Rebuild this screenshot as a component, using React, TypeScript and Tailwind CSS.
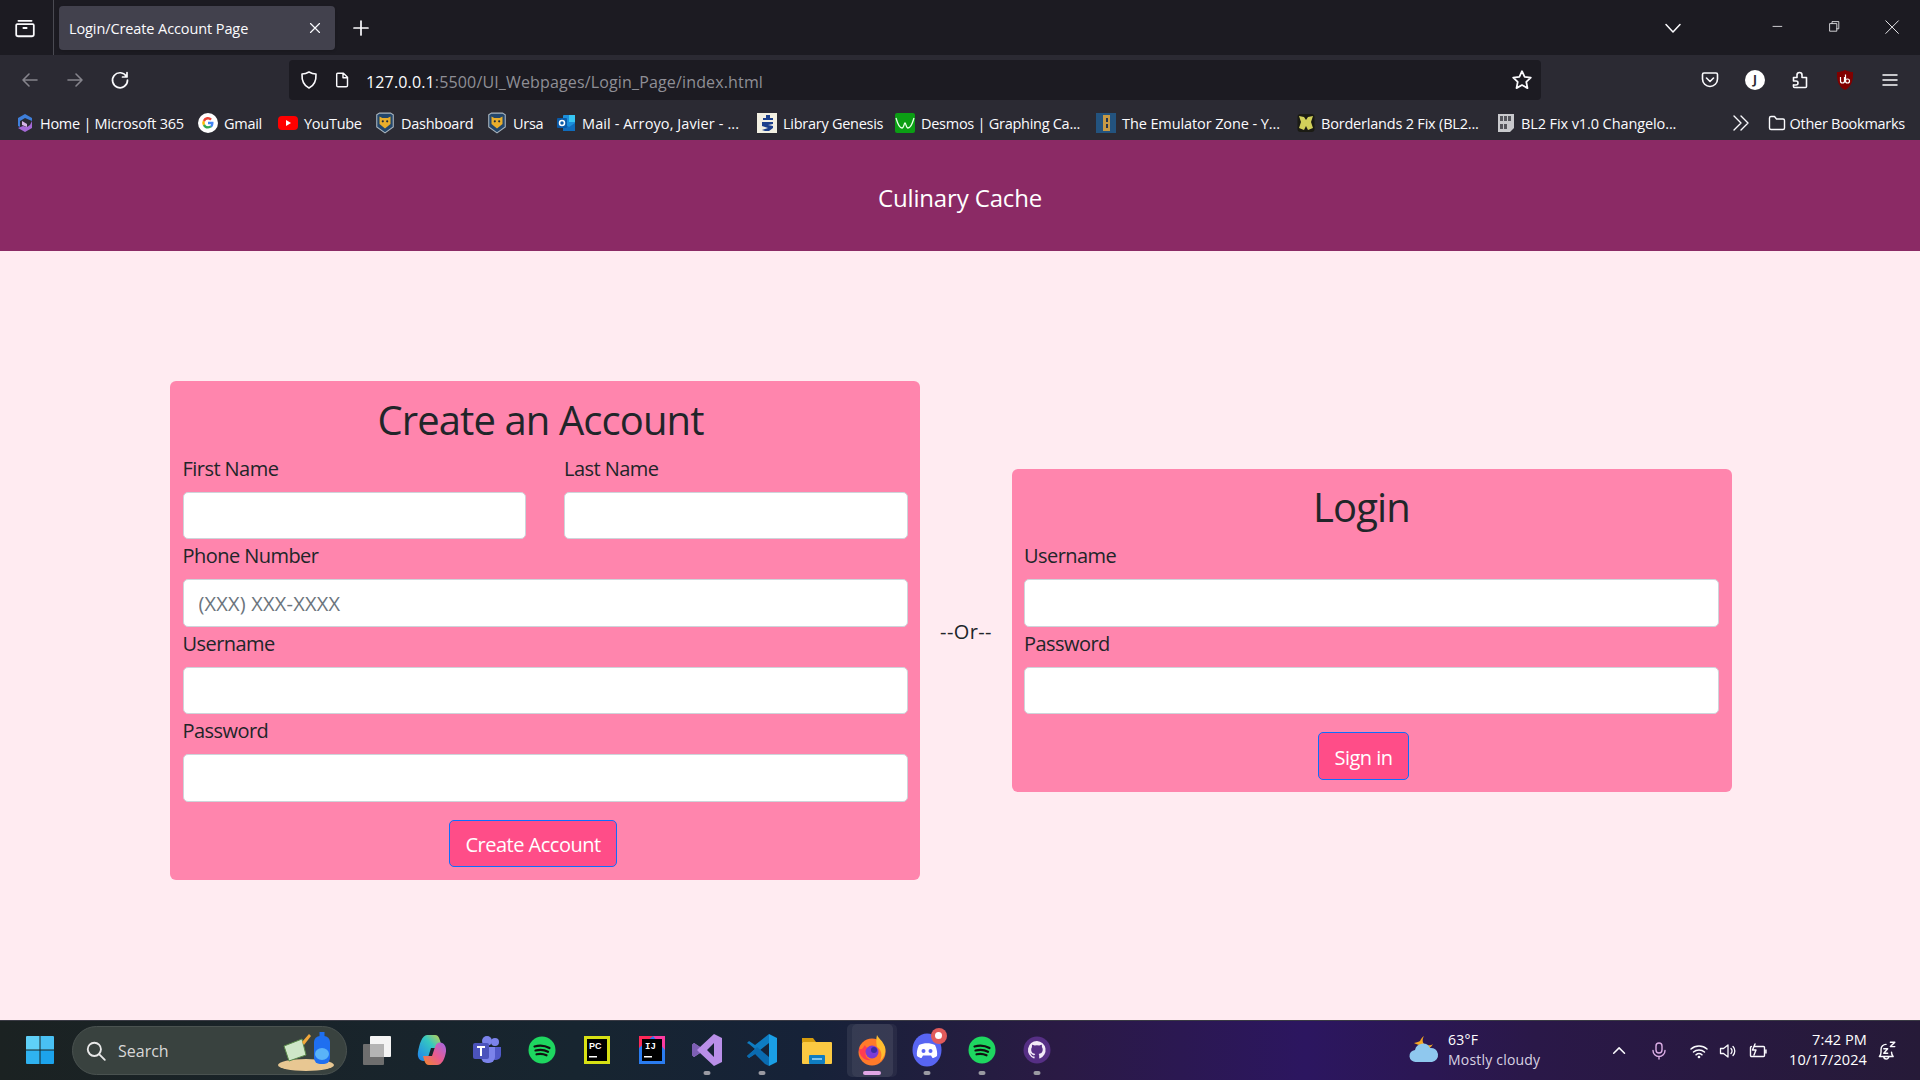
import React from "react";

const Stroke = ({ children, size = 20, className = "", w = 1.6, color = "#fbfbfe" }: any) => (
  <svg width={size} height={size} viewBox="0 0 20 20" fill="none" stroke={color} strokeWidth={w} strokeLinecap="round" strokeLinejoin="round" className={`shrink-0 ${className}`}>
    {children}
  </svg>
);

const Hex = () => (
  <svg width="20" height="22" viewBox="0 0 18 20" className="shrink-0">
    <path d="M1.500 2.500L4 1h10l2.500 1.500v11L9 19l-7.500-5.500z" fill="#23466b" stroke="#a9b4bd" strokeWidth="1" />
    <path d="M4 4l2.500 1.500h5L14 4v7l-5 4-5-4z" fill="#e8ae2c" />
    <circle cx="7" cy="8.500" r="1" fill="#1c2b3c" />
    <circle cx="11" cy="8.500" r="1" fill="#1c2b3c" />
  </svg>
);

const bookmarks: { cls: string; label: string; icon: React.ReactNode }[] = [
  {
    cls: "w-[182px]", label: "Home | Microsoft 365",
    icon: (
      <svg width="18" height="20" viewBox="0 0 18 20" className="shrink-0">
        <path d="M9 1l7 4v3l-7-3-5 3v6l-2-1V5z" fill="#3f7fdb" />
        <path d="M16 8v7l-7 4-7-4 5-2 4 1 3-2z" fill="#a569d8" />
        <path d="M6 8l5 3v3l-5-2z" fill="#d7b4e8" />
      </svg>
    ),
  },
  {
    cls: "w-[80px]", label: "Gmail",
    icon: (
      <svg width="20" height="20" viewBox="0 0 20 20" className="shrink-0">
        <circle cx="10" cy="10" r="10" fill="#fff" />
        <path d="M15.500 10c0-.5 0-.9-.1-1.300H10v2.500h3.100a2.700 2.700 0 01-1.200 1.800l1.900 1.400c1.100-1 1.700-2.500 1.700-4.400z" fill="#4285f4" />
        <path d="M10 15.500c1.500 0 2.800-.5 3.800-1.400l-1.900-1.400c-.5.300-1.100.5-1.900.5a3.300 3.300 0 01-3.100-2.300l-2 1.500A5.500 5.500 0 0010 15.500z" fill="#34a853" />
        <path d="M6.900 10.900a3.300 3.300 0 010-2.200L4.900 7.200a5.500 5.500 0 000 5.200z" fill="#fbbc05" />
        <path d="M10 6.600c.8 0 1.600.3 2.200.9l1.700-1.700A5.500 5.500 0 004.900 7.200l2 1.500A3.300 3.300 0 0110 6.600z" fill="#ea4335" />
      </svg>
    ),
  },
  {
    cls: "w-[97px]", label: "YouTube",
    icon: (
      <svg width="20" height="20" viewBox="0 0 20 20" className="shrink-0">
        <rect x="0" y="3" width="20" height="14" rx="4" fill="#f00" />
        <path d="M8 7l5 3-5 3z" fill="#fff" />
      </svg>
    ),
  },
  { cls: "w-[112px]", label: "Dashboard", icon: <Hex /> },
  { cls: "w-[69px]", label: "Ursa", icon: <Hex /> },
  {
    cls: "w-[201px] tracking-[0.100px]", label: "Mail - Arroyo, Javier - ...",
    icon: (
      <svg width="20" height="20" viewBox="0 0 20 20" className="shrink-0">
        <rect x="7" y="2" width="12" height="15" rx="1" fill="#1c8fdc" />
        <rect x="13" y="2" width="6" height="7" fill="#37c6f4" />
        <path d="M7 10l6 4 6-4v8H7z" fill="#0f6cbd" />
        <rect x="1" y="5" width="10" height="10" rx="1" fill="#0a5aa8" />
        <circle cx="6" cy="10" r="2.500" fill="none" stroke="#fff" strokeWidth="1.500" />
      </svg>
    ),
  },
  {
    cls: "w-[138px]", label: "Library Genesis",
    icon: (
      <svg width="20" height="20" viewBox="0 0 20 20" className="shrink-0">
        <rect width="20" height="20" fill="#f2efe2" />
        <path d="M9 2h4v3h3v2H6V5h3zM5 9h11v2l-5 1 5 1v2l-4 3H8l-3-1 6-2-6-2z" fill="#1c3f8c" />
      </svg>
    ),
  },
  {
    cls: "w-[201px]", label: "Desmos | Graphing Ca...",
    icon: (
      <svg width="20" height="20" viewBox="0 0 20 20" className="shrink-0">
        <rect width="20" height="20" rx="2" fill="#0b9e14" />
        <path d="M1 5c2 7 4 10 6 10s2-5 3-5 1 5 3 5 4-3 6-10" fill="none" stroke="#e8ffe8" strokeWidth="1.300" />
      </svg>
    ),
  },
  {
    cls: "w-[201px] tracking-[-0.100px]", label: "The Emulator Zone - Y...",
    icon: (
      <svg width="20" height="20" viewBox="0 0 20 20" className="shrink-0">
        <rect width="20" height="20" fill="#23537f" />
        <path d="M7 2h7v16H7z" fill="#c79a45" />
        <path d="M10 5h2v4h-2zM10 11h2v4h-2z" fill="#23334f" />
      </svg>
    ),
  },
  {
    cls: "w-[200px] tracking-[-0.200px]", label: "Borderlands 2 Fix (BL2...",
    icon: (
      <svg width="18" height="20" viewBox="0 0 18 20" className="shrink-0">
        <rect x="0.500" y="1" width="17" height="18" rx="3" fill="#1b1b14" />
        <path d="M2 3l5 1 2 3 2-3 5-1-2 6 2 6-5 2-2-4-2 4-5-2 2-6z" fill="#d2d05a" />
      </svg>
    ),
  },
  {
    cls: "w-[190px] tracking-[-0.100px]", label: "BL2 Fix v1.0 Changelo...",
    icon: (
      <svg width="18" height="20" viewBox="0 0 18 20" className="shrink-0">
        <path d="M1 1h16v14l-4 4H1z" fill="#c9c9cd" />
        <path d="M3 3h3v5H3zM7 3h3v5H7zM11 3h3v5h-3zM3 11h3v5H3zM7 11h3v5H7z" fill="#55555c" />
      </svg>
    ),
  },
];

const Field = ({ label, placeholder }: { label: string; placeholder?: string }) => (
  <div className="flex flex-col">
    <label className="h-[30px] mb-[10px] text-[20px] leading-[33px] tracking-[-0.550px] text-[#212529]">{label}</label>
    <input
      placeholder={placeholder}
      readOnly
      className="h-[47.500px] w-full rounded-[5px] border border-[#ced4da] bg-white px-[15px] pt-[1px] text-[20px] tracking-[0.200px] text-[#212529] placeholder:text-[#6c757d] outline-none"
    />
  </div>
);

const PinkButton = ({ children }: { children: React.ReactNode }) => (
  <button className="h-[47.500px] rounded-[5px] border border-[#0d6efd] bg-[#ff4d88] px-[15px] pt-[3px] text-[20px] tracking-[-0.500px] text-white">{children}</button>
);

const Title = ({ children, className = "" }: { children: React.ReactNode; className?: string }) => (
  <h2 className={`h-[48px] mb-[10px] text-[40px] leading-[52px] tracking-[-0.900px] text-[#212529] text-center ${className}`}>{children}</h2>
);

const Dot = ({ active = false }: { active?: boolean }) => (
  <span className={`absolute bottom-[3px] left-1/2 -translate-x-1/2 h-[4px] rounded-full ${active ? "w-[18px] bg-[#e0a6e6]" : "w-[7px] bg-[#9a9aa2]"}`} />
);

const TaskIcon = ({ children, dot, active }: { children: React.ReactNode; dot?: boolean; active?: boolean }) => (
  <div className="relative flex h-[55px] w-[55px] shrink-0 items-center justify-center pb-[2px]">
    {active && (
      <>
        <span className="absolute bottom-[1px] left-[8px] right-[2px] top-[1px] rounded-[5px] bg-[#ffffff0d]" />
        <span className="absolute bottom-[1px] left-[3px] right-[6px] top-[1px] rounded-[5px] bg-[#ffffff14]" />
      </>
    )}
    <span className="relative flex">{children}</span>
    {dot && <Dot active={active} />}
  </div>
);

const Bubble = ({ bg, children }: { bg: string; children: React.ReactNode }) => (
  <svg width="28" height="28" viewBox="0 0 28 28"><circle cx="14" cy="14" r="13.500" fill={bg} />{children}</svg>
);

const SpotifyIcon = () => (
  <Bubble bg="#1ed760">
    <path d="M6.500 10.500c5-1.500 10.500-1 15 1.500M7.500 14.500c4.500-1.200 9-.7 12.500 1.300M8.500 18.300c3.500-.8 7-.5 10 1" fill="none" stroke="#111" strokeWidth="2.200" strokeLinecap="round" />
  </Bubble>
);

export default function App() {
  return (
    <div className="flex h-[1080px] w-[1920px] flex-col overflow-hidden bg-[#ffebf1] font-['Open_Sans','Noto_Sans',sans-serif]">
      {/* tab strip */}
      <div className="flex h-[55px] shrink-0 items-center bg-[#1c1b22] text-[#fbfbfe]">
        <div className="flex h-full w-[54px] shrink-0 items-center justify-center border-r border-[#4a4a52] pr-[4px]">
          <Stroke size={22}>
            <path d="M4 3.500h12M3 6.500h14a1 1 0 011 1V16a1.500 1.500 0 01-1.500 1.500h-13A1.500 1.500 0 012 16V7.500a1 1 0 011-1z" />
            <path d="M8.500 10h3" />
          </Stroke>
        </div>
        <div className="ml-[5px] flex h-[44px] w-[276px] shrink-0 items-center justify-between rounded-[4px] bg-[#42414d] pl-[10px] pr-[11px] shadow">
          <span className="pt-[2px] text-[14.500px] tracking-[-0.100px]">Login/Create Account Page</span>
          <Stroke size={18} w={1.300}><path d="M5 5l10 10M15 5L5 15" /></Stroke>
        </div>
        <div className="ml-[16px]">
          <Stroke size={20} w={1.700}><path d="M10 3v14M3 10h14" /></Stroke>
        </div>
        <div className="ml-auto flex items-center">
          <Stroke size={20} w={1.500}><path d="M3 6.500l7 7.500 7-7.500" /></Stroke>
          <div className="ml-[88px]"><Stroke size={16} w={1}><path d="M2.500 8h11" /></Stroke></div>
          <div className="ml-[41px]">
            <Stroke size={16} w={1}><path d="M5 4V2h8.500v9H11M2.500 4.500H11V14H2.500z" /></Stroke>
          </div>
          <div className="ml-[40px] mr-[18px]"><Stroke size={18} w={1}><path d="M2 2l14 14M16 2L2 16" /></Stroke></div>
        </div>
      </div>

      {/* nav bar */}
      <div className="flex h-[50px] shrink-0 items-center bg-[#2b2a33] text-[#fbfbfe]">
        <div className="ml-[20px] flex w-[269px] items-center">
          <Stroke size={20} color="#85848c"><path d="M3 10h14M9 4l-6 6 6 6" /></Stroke>
          <div className="ml-[25px]"><Stroke size={20} color="#85848c"><path d="M3 10h14M11 4l6 6-6 6" /></Stroke></div>
          <div className="ml-[25px]"><Stroke size={20} w={1.700}><path d="M16.500 6.500A7.500 7.500 0 1017.500 10M17 2.500v4.500h-4.500" /></Stroke></div>
        </div>
        <div className="flex h-[40px] w-[1252px] shrink-0 items-center rounded-[4px] bg-[#1c1b22] pl-[10px] pr-[8px]">
          <Stroke size={20}><path d="M10 2c2.500 1.500 4.500 2 7 2 .3 6-1.500 11.500-7 14C4.500 15.500 2.700 10 3 4c2.500 0 4.500-.5 7-2z" /></Stroke>
          <div className="ml-[15px]"><Stroke size={18}><path d="M4 2.500h6.500L15 7v9a1.500 1.500 0 01-1.500 1.500h-9A1.500 1.500 0 013 16V3.500a1 1 0 011-1zM10 2.500V7.500h5" /></Stroke></div>
          <span className="ml-[14px] pt-[3px] text-[16px] tracking-[0.150px] text-[#fbfbfe]">127.0.0.1<span className="text-[#8f8f96]">:5500/UI_Webpages/Login_Page/index.html</span></span>
          <div className="ml-auto"><Stroke size={22}><path d="M10 2l2.400 5.200 5.600.7-4.100 3.900 1.100 5.600L10 14.600l-5 2.800 1.100-5.600L2 7.900l5.600-.7z" /></Stroke></div>
        </div>
        <div className="ml-auto flex items-center">
          <Stroke size={20}><path d="M4 3h12a1.500 1.500 0 011.500 1.500V9a7.500 7.500 0 01-15 0V4.500A1.500 1.500 0 014 3z" /><path d="M6.500 8l3.500 3.500L13.500 8" /></Stroke>
          <div className="ml-[25px] flex h-[20px] w-[20px] items-center justify-center rounded-full bg-white text-[12px] font-bold text-[#2b2a33]">J</div>
          <div className="ml-[25px]"><Stroke size={20}><path d="M7 17.500h8.500a1 1 0 001-1V7.500H12V5a2.500 2.500 0 00-5 0v2.500H3.500V11H6a2 2 0 010 4H3.500" /><path d="M3.500 15v1.500a1 1 0 001 1H7" /></Stroke></div>
          <div className="ml-[25px]">
            <svg width="20" height="22" viewBox="0 0 20 22"><path d="M10 1c3 1.500 5.500 2 8 2 .5 8-1.500 15-8 18C3.500 18 1.500 11 2 3c2.500 0 5-.5 8-2z" fill="#800000" /><path d="M5.500 8v4a2 2 0 004 0V8M10.500 5.500V12a2 2 0 004 0 2 2 0 00-4 0" fill="none" stroke="#fff" strokeWidth="1.200" /></svg>
          </div>
          <div className="ml-[25px] mr-[20px]"><Stroke size={20} w={1.500}><path d="M3 5h14M3 10h14M3 15h14" /></Stroke></div>
        </div>
      </div>

      {/* bookmarks */}
      <div className="flex h-[35px] shrink-0 items-center bg-[#2b2a33] pl-[16px] text-[14.500px] tracking-[-0.270px] text-[#fbfbfe]">
        {bookmarks.map((b, i) => (
          <div key={i} className={`flex shrink-0 items-center gap-[6px] whitespace-nowrap ${b.cls}`}>
            {b.icon}
            <span className="pt-[2px]">{b.label}</span>
          </div>
        ))}
        <div className="ml-auto flex items-center">
          <Stroke size={20} w={1.400}><path d="M3 3l7 7-7 7M10 3l7 7-7 7" /></Stroke>
          <div className="ml-[16px]"><Stroke size={20} w={1.400}><path d="M2.500 5a1.500 1.500 0 011.500-1.500h3.500L9.500 6H16a1.500 1.500 0 011.500 1.500V15a1.500 1.500 0 01-1.500 1.500H4A1.500 1.500 0 012.500 15z" /></Stroke></div>
          <span className="ml-[3px] mr-[15px] pt-[2px]">Other Bookmarks</span>
        </div>
      </div>

      {/* site header */}
      <header className="flex h-[111px] shrink-0 items-center justify-center bg-[#8b2a65] pt-[4px] text-[24px] tracking-[-0.150px] text-white">
        Culinary Cache
      </header>

      {/* page */}
      <main className="flex flex-1 items-center pb-[10px] pl-[170px]">
        <section className="w-[750px] shrink-0 rounded-[6px] bg-[#ff85ad] p-[12.500px]">
          <Title className="pr-[9px]">Create an Account</Title>
          <div className="grid grid-cols-2 gap-x-[38px]">
            <Field label="First Name" />
            <Field label="Last Name" />
          </div>
          <Field label="Phone Number" placeholder="(XXX) XXX-XXXX" />
          <Field label="Username" />
          <Field label="Password" />
          <div className="mt-[18px] flex justify-center pr-[24px]">
            <PinkButton>Create Account</PinkButton>
          </div>
        </section>
        <div className="w-[92px] shrink-0 pt-[2px] text-center text-[20px] tracking-[0.400px] text-[#212529]">--Or--</div>
        <section className="w-[720px] shrink-0 rounded-[6px] bg-[#ff85ad] py-[12.500px] pl-[12px] pr-[13px]">
          <Title className="pr-[20px]">Login</Title>
          <Field label="Username" />
          <Field label="Password" />
          <div className="mt-[18px] flex justify-center pr-[16px]">
            <PinkButton>Sign in</PinkButton>
          </div>
        </section>
      </main>

      {/* taskbar */}
      <footer className="flex h-[60px] shrink-0 items-center border-t border-[#3a3a44] bg-[linear-gradient(90deg,#1b2222_0%,#172530_30%,#162238_42%,#2a1a44_55%,#2c1660_68%,#2a1848_80%,#261a38_100%)] pl-[12px] text-white">
        <TaskIcon>
          <svg width="30" height="30" viewBox="0 0 30 30">
            <path d="M1 2a1 1 0 011-1h12.500v13.500H1z" fill="#5fd0f7" />
            <path d="M15.500 1H28a1 1 0 011 1v12.500H15.500z" fill="#49c1f4" />
            <path d="M1 15.500h13.500V29H2a1 1 0 01-1-1z" fill="#2fb2f0" />
            <path d="M15.500 15.500H29V28a1 1 0 01-1 1H15.500z" fill="#1ca3ec" />
          </svg>
        </TaskIcon>
        <div className="ml-[5px] flex h-[49px] w-[275px] shrink-0 items-center rounded-full border border-[#4a5250] bg-[#39423f] pl-[12px] pr-[10px]">
          <Stroke size={22} w={1.700} color="#e8e8e8"><circle cx="8.500" cy="8.500" r="6" /><path d="M13 13l5 5" /></Stroke>
          <span className="ml-[11px] text-[16px] text-[#d8d8d8]">Search</span>
          <div className="ml-auto">
            <svg width="58" height="42" viewBox="0 0 58 42">
              <ellipse cx="28" cy="35" rx="28" ry="6" fill="#e8c792" />
              <path d="M6 16l18-7 4 16-17 6z" fill="#cfe6c8" stroke="#5a8a4a" />
              <path d="M24 12l7-8 2 2-7 9z" fill="#f2a83b" />
              <rect x="36" y="6" width="16" height="28" rx="6" fill="#1f6ff0" />
              <path d="M44 2v6" stroke="#1f6ff0" strokeWidth="5" />
              <ellipse cx="44" cy="24" rx="7" ry="6" fill="#5ab3f8" />
            </svg>
          </div>
        </div>
        <div className="ml-[2px] flex items-center">
          <TaskIcon>
            <svg width="30" height="30" viewBox="0 0 30 30">
              <rect x="8" y="1" width="21" height="21" rx="1" fill="#f4f4f4" />
              <rect x="1" y="9" width="21" height="21" rx="1" fill="#6e6e6e" />
              <rect x="8" y="9" width="14" height="13" fill="#b4b4b4" />
            </svg>
          </TaskIcon>
          <TaskIcon>
            <svg width="30" height="32" viewBox="0 0 30 32">
              <defs>
                <linearGradient id="cp1" x1="0" y1="1" x2="1" y2="0"><stop offset="0" stopColor="#1f7ff0" /><stop offset="0.600" stopColor="#35c8c0" /><stop offset="1" stopColor="#d8d040" /></linearGradient>
                <linearGradient id="cp2" x1="0" y1="1" x2="1" y2="0"><stop offset="0" stopColor="#f08a28" /><stop offset="0.500" stopColor="#e85a90" /><stop offset="1" stopColor="#a06ae8" /></linearGradient>
              </defs>
              <path d="M10 1h8c2.500 0 3.500 1.500 4.500 4l3 9H14l-3 9.500C10 26 8.500 27 6.500 27 2.500 27 0 23 1 18 2 11 5 1 10 1z" fill="url(#cp1)" />
              <path d="M20 31h-8c-2.500 0-3.500-1.500-4.500-4L6 22h9l3-9c1-3 2.500-4.500 5-4.500 4 0 6.500 4 6 9-1 7-4 13.500-9 13.500z" fill="url(#cp2)" />
            </svg>
          </TaskIcon>
          <TaskIcon>
            <svg width="30" height="30" viewBox="0 0 30 30">
              <circle cx="23" cy="7" r="4" fill="#7b83eb" />
              <circle cx="15" cy="6" r="5" fill="#7b83eb" />
              <path d="M18 12h11v8a5 5 0 01-5 5h-1a5 5 0 01-5-5z" fill="#5059c9" />
              <path d="M9 12h14v10a6 6 0 01-6 6h-2a6 6 0 01-6-6z" fill="#7b83eb" />
              <rect x="1" y="8" width="16" height="16" rx="2" fill="#4b53bc" />
              <path d="M5 12h8M9 12v9" stroke="#fff" strokeWidth="2" />
            </svg>
          </TaskIcon>
          <TaskIcon><SpotifyIcon /></TaskIcon>
          <TaskIcon>
            <svg width="26" height="28" viewBox="0 0 26 28">
              <rect width="26" height="28" fill="#d8e014" />
              <rect x="3" y="3" width="20" height="22" fill="#000" />
              <text x="5" y="13" fontSize="9" fontWeight="700" fill="#fff" fontFamily="Liberation Sans">PC</text>
              <rect x="5" y="20" width="8" height="1.500" fill="#fff" />
            </svg>
          </TaskIcon>
          <TaskIcon>
            <svg width="26" height="28" viewBox="0 0 26 28">
              <rect width="26" height="28" fill="#2a7cf0" />
              <path d="M0 0h14L0 12z" fill="#fe2857" />
              <path d="M26 0v14L14 0z" fill="#fc3ba0" />
              <rect x="3" y="3" width="20" height="22" fill="#000" />
              <text x="6" y="13" fontSize="9" fontWeight="700" fill="#fff" fontFamily="Liberation Mono">IJ</text>
              <rect x="5" y="20" width="8" height="1.500" fill="#fff" />
            </svg>
          </TaskIcon>
          <TaskIcon dot>
            <svg width="30" height="34" viewBox="0 0 30 34">
              <path d="M22 1l8 4v24l-8 4-14-13-6 4-2-2V12l2-2 6 4zM22 10l-7 7 7 7z" fill="#b98fe8" fillRule="evenodd" />
              <path d="M0 12l2-2 6 4-3 3 3 3-6 4-2-2z" fill="#7d5fb4" />
            </svg>
          </TaskIcon>
          <TaskIcon dot>
            <svg width="30" height="34" viewBox="0 0 30 34">
              <path d="M22 1l8 4v24l-8 4z" fill="#1a9fe6" />
              <path d="M22 1v9L8 21l-6 4-2-2 8-7L2 11l-2-1 2-2 6 4z" fill="#0e7cc2" />
              <path d="M22 33v-9L10 14 8 16l-8 7 2 2 6-4 10 10z" fill="#0a6bb0" />
            </svg>
          </TaskIcon>
          <TaskIcon>
            <svg width="30" height="30" viewBox="0 0 30 30">
              <path d="M0 3h11l3 4h-14z" fill="#d69c0d" />
              <rect y="7" width="30" height="22" rx="1" fill="#fbc942" />
              <rect x="7" y="20" width="16" height="9" rx="1" fill="#0f7dc2" />
              <rect x="10" y="23" width="10" height="2" fill="#7ec4ee" />
            </svg>
          </TaskIcon>
          <TaskIcon dot active>
            <svg width="30" height="32" viewBox="0 0 30 32">
              <circle cx="15" cy="18" r="13.500" fill="#ff7a2a" />
              <path d="M20 1c2 4 6 6 8 12 1.500 5-1 11-5 14 3-6 1-12-3-14-1-4-1-8 0-12z" fill="#ffbd2e" />
              <path d="M2 14c2 3 4 0 6-3 1 3 3 3 4 4-5 2-5 9 2 11-6 1-12-3-12-12z" fill="#ff3b52" />
              <circle cx="15" cy="18" r="6.500" fill="#7a3bd6" />
              <circle cx="17" cy="16" r="3" fill="#3b2ca8" />
            </svg>
          </TaskIcon>
          <TaskIcon dot>
            <div className="relative">
              <svg width="30" height="34" viewBox="0 0 30 34">
                <ellipse cx="15" cy="17" rx="14.500" ry="16.500" fill="#5865f2" />
                <path d="M7 12c5-2.500 11-2.500 16 0 2 4 2.500 8 2 11-2 1.500-3.500 2-4.500 2l-1.500-2.500h-8L9.500 25c-1 0-2.500-.5-4.500-2-.5-3 0-7 2-11z" fill="#fff" />
                <circle cx="11.500" cy="18" r="2" fill="#5865f2" />
                <circle cx="18.500" cy="18" r="2" fill="#5865f2" />
              </svg>
              <span className="absolute -right-[5px] -top-[5px] flex h-[16px] w-[16px] items-center justify-center rounded-full bg-[#e15b5b]">
                <span className="h-[7px] w-[7px] rounded-full bg-white" />
              </span>
            </div>
          </TaskIcon>
          <TaskIcon dot><SpotifyIcon /></TaskIcon>
          <TaskIcon dot>
            <Bubble bg="#562f85">
              <path d="M14 5a9 9 0 00-3 17.500c.5 0 .6-.2.6-.4v-1.600c-2.500.5-3-1.200-3-1.200-.4-1-1-1.300-1-1.300-.8-.6.100-.6.100-.6.900.1 1.400.9 1.400.9.800 1.400 2.100 1 2.600.8a2 2 0 01.6-1.200c-2-.2-4.100-1-4.100-4.400 0-1 .3-1.800.9-2.400-.1-.2-.4-1.100.1-2.400 0 0 .8-.2 2.500.9a8.600 8.600 0 014.500 0c1.700-1.100 2.500-.9 2.500-.9.500 1.300.2 2.200.1 2.400.6.600.9 1.400.9 2.400 0 3.400-2.100 4.200-4.100 4.400.3.300.6.800.6 1.600v2.500c0 .2.100.4.600.4A9 9 0 0014 5z" fill="#f2eaf8" />
            </Bubble>
          </TaskIcon>
        </div>
        <div className="ml-auto flex items-center">
          <svg width="34" height="34" viewBox="0 0 34 34">
            <path d="M17 2c-2 3-2 8 2 9 3 .8 6 .2 7-1-3 7-12 7-14 1-2-.5-4-1.500-5-2 3-.5 5-1.500 6-2 1-2 2-4 4-5z" fill="#f5a623" />
            <path d="M9 28a6 6 0 01-1-12 8 8 0 0115-2 7 7 0 012 14z" fill="#8fc8ee" />
          </svg>
          <div className="ml-[7px] w-[163px] -mt-[2px] text-[14px] leading-[20px] tracking-[0.200px]">
            <div className="text-white">63°F</div>
            <div className="text-[#d8d2e2]">Mostly cloudy</div>
          </div>
          <Stroke size={18} w={1.700}><path d="M3 12.500L9 6.500l6 6" /></Stroke>
          <div className="ml-[20px]"><Stroke size={20} w={1.400} color="#dcaee6"><rect x="7" y="2" width="6" height="10" rx="3" /><path d="M4 9.500a6 6 0 0012 0M10 15.500V18" /></Stroke></div>
          <div className="ml-[20px]"><Stroke size={20} w={1.500}><path d="M2 8c4.500-4 11.500-4 16 0M4.500 11c3-2.700 8-2.700 11 0M7 13.800c1.700-1.400 4.300-1.400 6 0" /><circle cx="10" cy="16" r=".6" fill="#fff" /></Stroke></div>
          <div className="ml-[9px]"><Stroke size={20} w={1.300}><path d="M2.500 7.500h3L10 4v12l-4.500-3.500h-3zM13 7.500a3.500 3.500 0 010 5M15 5.500a6.500 6.500 0 010 9" /></Stroke></div>
          <div className="ml-[10px]"><Stroke size={20} w={1.400}><path d="M7 5.500h8.500a1 1 0 011 1v8a1 1 0 01-1 1h-12a1 1 0 01-1-1v-8a1 1 0 011-1M18 9v3M7 3L4.500 9H8l-2 5" /></Stroke></div>
          <div className="ml-[21px] -mt-[2px] text-right text-[14.500px] leading-[20px] tracking-[0.100px]">
            <div>7:42 PM</div>
            <div>10/17/2024</div>
          </div>
          <div className="ml-[8px] mr-[23px]"><Stroke size={22} w={1.300}><path d="M4 15c1-1 1.500-2 1.500-4V8.500A4.500 4.500 0 0110 4M15 11c0 2 .5 3 1.500 4H4M8 15a2.200 2.200 0 004.500 0M8 8h3.500L8 12h3.500M14 2h4l-4 4h4" /></Stroke></div>
        </div>
      </footer>
    </div>
  );
}
